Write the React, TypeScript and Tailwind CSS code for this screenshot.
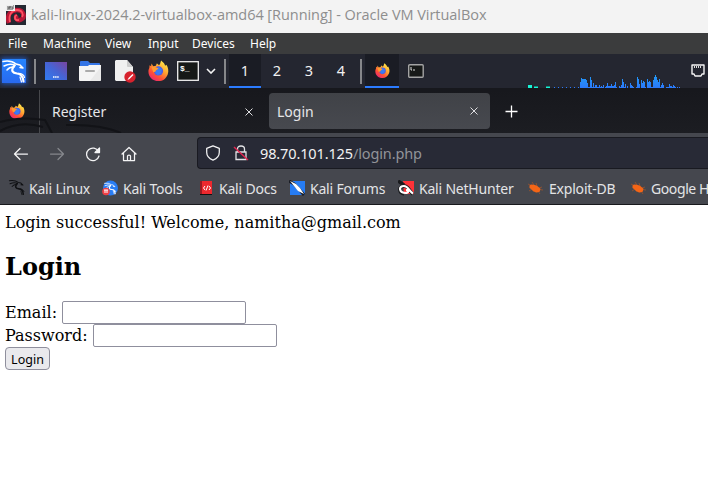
import type { ReactNode } from 'react';

const ui = "font-['Noto_Sans',sans-serif]";

function Firefox({ size }: { size: number }) {
  const id = 'fx' + size;
  return (
    <svg width={size} height={size} viewBox="0 0 24 24" className="shrink-0">
      <defs>
        <linearGradient id={id} x1="0.85" y1="0.05" x2="0.2" y2="1">
          <stop offset="0" stopColor="#fff04d" />
          <stop offset=".4" stopColor="#ffa12f" />
          <stop offset=".7" stopColor="#ff5035" />
          <stop offset="1" stopColor="#e6227a" />
        </linearGradient>
      </defs>
      <path fill={`url(#${id})`} d="M4 4l2 3 3-.5L10 4c1 .4 2 1 2.500 2C14 5 14 3 15 .5c2 2 4 3 4.500 6l1.500-1c2 3 3 7 1.500 11C20.500 21.500 17 24 12 24 5 24 .5 19 .5 13c0-2 .5-3 1-4l.3-3 1.700 1z" />
      <circle cx="12" cy="12.500" r="5.300" fill="#5558dc" />
      <path fill="#397bf4" d="M12 7.500l4 3-1 5-4 2-3-3z" />
      <path fill="#ff9c32" d="M4 8c3-1 5 .2 8 1.500-1 2-3.500 2-3.500 4L6 14z" />
    </svg>
  );
}

function DragonLines({ color }: { color: string }) {
  return (
    <g fill="none" stroke={color} strokeLinecap="round" strokeLinejoin="round">
      <path strokeWidth="1.500" d="M1 2.500Q9 1 14 5l4 1 3 3-3-.5M2 7q6-3 11-.5M5 11q3-3.500 7-3" />
      <path strokeWidth="2.200" d="M12.500 6.500C8 12 11 14 15 14.500c4 .4 6 3.500 6.500 8" />
      <path strokeWidth="1.200" d="M15 14.500c5-.5 7 2 7.500 4M18 18l1.500 5" />
    </g>
  );
}

function Beetle() {
  return (
    <svg width="15" height="14" viewBox="0 0 15 14">
      <path d="M0 3l4 2M4 1l2 3M8 2l1 3M14 6l-3 1M15 9l-4-.5M4 8l-3 2M8 10v2M12 13l-2-3" stroke="#9b542d" strokeWidth=".8" fill="none" />
      <path fill="#f46516" d="M1.500 4.500L3 3.500l3 .3 3 1 3.500 3-.8 3-2.700.7-3.500-1-2.500-2.500-1.500-1z" />
    </svg>
  );
}

function NavIcon({ children, dim }: { children: ReactNode; dim?: boolean }) {
  return (
    <svg width="16" height="16" viewBox="0 0 16 16" fill="none" stroke={dim ? '#85878c' : '#f4f4f5'} strokeWidth="1.250" strokeLinecap="round" strokeLinejoin="round" className="shrink-0">
      {children}
    </svg>
  );
}

function Cross() {
  return <svg width="8" height="8" viewBox="0 0 8 8" className="shrink-0"><path d="M.5.5l7 7m0-7l-7 7" stroke="#dedee0" strokeWidth="1" /></svg>;
}

const menus: [string, string][] = [['File', 'w-[35px]'], ['Machine', 'w-[62px]'], ['View', 'w-[43px]'], ['Input', 'w-[44px]'], ['Devices', 'w-[58px]'], ['Help', 'w-[40px]']];

const load = [6,10,9,9,9,9,8,5,1,1,11,8,1,5,1,3,3,1,1,3,1,2,1,3,0,1,2,5,2,2,2,4,2,2,3,6,1,0,0,2,1,3,9,6,1,4,0,2,0,0,5,3,2,1,0,0,1,11,9,4,0,8,5,7,6,1,0,9,6,7,6,1,1,8,11,13,11,8,6,9,1,3,5,3,0,0,1,1,1,4,2,2,1,3,2,1,0,1,0,1];

function LoadGraph() {
  return (
    <svg width="152" height="34" viewBox="528 54 152 34" shapeRendering="crispEdges">
      <defs><linearGradient id="load" gradientUnits="userSpaceOnUse" x1="0" x2="0" y1="75" y2="88"><stop stopColor="#219bf5" /><stop offset="1" stopColor="#2b79fb" /></linearGradient></defs>
      <path fill="#16f5d6" d="M528 85h4v3h-4zM534 87h4v1h-4zM546 87h4v1h-4z" />
      <path fill="#178b80" d="M534 86h4v1h-4zM546 86h4v1h-4z" />
      {[554, 558, 562, 566, 570, 574, 578].map((x) => <rect key={x} x={x} y="87" width="1" height="1" fill="#2b79fb" />)}
      {load.map((h, i) => <rect key={i} x={580 + i} y={88 - h} width="1" height={h} fill="url(#load)" />)}
    </svg>
  );
}

function Bookmark({ icon, label, width, tight }: { icon: ReactNode; label: string; width: string; tight?: boolean }) {
  return (
    <div className={`flex shrink-0 items-center ${width}`}>
      <span className={`flex shrink-0 items-center ${tight ? 'w-[20px]' : 'w-[21px]'}`}>{icon}</span>
      <span className={`pt-[2px] whitespace-nowrap ${tight ? 'tracking-[-0.4px]' : 'tracking-[-0.2px]'}`}>{label}</span>
    </div>
  );
}

export default function App() {
  return (
    <div className={`flex h-[485px] w-[708px] flex-col overflow-hidden bg-white ${ui}`}>
      <header className="flex h-[33px] shrink-0 items-center bg-[#f3f3f3] pb-[4px] pl-[6px]">
        <svg width="20" height="20" viewBox="0 0 20 20" className="mr-[5px]">
          <path fill="#242831" d="M0 0h20v20H0z" />
          <path fill="none" stroke="#b91736" strokeWidth="4.500" d="M3 18C0 10 5 5 11 5c7 0 8 7 5 9-4 3-8-1-5-4" />
          <path fill="none" stroke="#ff5061" strokeWidth="1.800" d="M4 17C2 10 6 5 11 5c5 0 7 4 5 7M13 15c-5 1-5-4-2-5" />
          <path fill="#eee" d="M0 0h9v6H0z" />
          <path d="M2 1v4m0-2h2V1m0 0v4m2-4v4m0-2h2M7 1h1" stroke="#555" fill="none" />
        </svg>
        <span className="font-['Open_Sans',sans-serif] text-[14.5px] leading-5 tracking-[-0.05px] whitespace-nowrap text-[#8e8e8e]">kali-linux-2024.2-virtualbox-amd64 [Running] - Oracle VM VirtualBox</span>
      </header>
      <nav className="flex h-[21px] shrink-0 items-center bg-[#3b3c3d] pl-[8px] text-[12px] text-white">
        {menus.map(([m, w]) => <span key={m} className={`shrink-0 ${w}`}>{m}</span>)}
      </nav>
      <section className="flex h-[36px] shrink-0 border-b-2 border-[#17181d] bg-[#242630] text-[#f1f1f1]">
        <div className="flex w-[34px] shrink-0 items-center pl-[2px]">
          <svg width="24" height="24" viewBox="0 0 24 24" className="shadow-[0_0_5px_1px_#2559ba]">
            <defs><linearGradient id="kali" x2="0" y2="1"><stop stopColor="#2584ff" /><stop offset="1" stopColor="#2869ef" /></linearGradient></defs>
            <path fill="url(#kali)" d="M0 0h24v24H0z" /><DragonLines color="#fff" />
          </svg>
        </div>
        <i className="mt-[5px] h-[25px] w-[2px] shrink-0 bg-[#86878a]" />
        <div className="w-[34px] shrink-0 pt-[8px] pl-[9px]">
          <svg width="22" height="18" viewBox="0 0 22 18"><defs><linearGradient id="desk" x1="0" x2="1" y1="1" y2="0"><stop stopColor="#317cf1" /><stop offset=".5" stopColor="#4664d4" /><stop offset="1" stopColor="#79459f" /></linearGradient></defs><path fill="url(#desk)" d="M0 0h22v18H0z" /><path d="M8 15h6" stroke="#fff" strokeWidth="1.500" strokeDasharray="1.500 .6" /></svg>
        </div>
        <div className="w-[35px] shrink-0 pt-[7px] pl-[9px]">
          <svg width="22" height="20" viewBox="0 0 22 20"><path fill="#3575e6" d="M1 6V1q0-1 1-1h7l2 2h9q1 0 1 1v4z" /><path fill="#f4f4f4" d="M0 5h9l1-1h12v15q0 1-1 1H1q-1 0-1-1z" /><path fill="#ddd" d="M22 6v13q0 1-1 1h-10z" opacity=".5" /><path d="M7 10h8" stroke="#aaa" strokeWidth="2" strokeLinecap="round" /></svg>
        </div>
        <div className="w-[43px] shrink-0 pt-[6px] pl-[10px]">
          <svg width="21" height="23" viewBox="0 0 21 23"><path fill="#f0f0f0" d="M0 1l1-1h11l6 7v13l-1 1H1l-1-1z" /><path fill="#ccc" d="M12 0l6 7h-5q-1 0-1-1z" /><circle cx="15" cy="17" r="5.700" fill="#d7222d" /><path d="M12.500 20l1-2 4-4 1 1-4 4z" fill="#fff" /></svg>
        </div>
        <div className="w-[28px] shrink-0 pt-[6px]"><Firefox size={21} /></div>
        <div className="w-[30px] shrink-0 pt-[7px]">
          <svg width="23" height="20" viewBox="0 0 23 20" className="ml-px"><rect x=".7" y=".7" width="20.600" height="18.600" fill="#161917" stroke="#f0f0f0" strokeWidth="1.300" /><text x="3" y="10" fill="#fff" fontFamily="Liberation Mono" fontWeight="bold" fontSize="8">$_</text></svg>
        </div>
        <div className="w-[18px] shrink-0 pt-[14px]"><svg width="10" height="6" viewBox="0 0 10 6"><path d="M1 1l4 4 4-4" fill="none" stroke="#f3f3f3" strokeWidth="1.600" /></svg></div>
        <i className="mt-[5px] h-[25px] w-[2px] shrink-0 bg-[#86878a]" />
        <div className="ml-[3px] flex text-center text-[14.5px] leading-[33px]">
          <span className="w-[32px] border-b-2 border-[#2b7bff] bg-[#1a1c24]">1</span>
          <span className="w-[32px]">2</span><span className="w-[32px]">3</span><span className="w-[32px]">4</span>
        </div>
        <i className="mt-[5px] ml-[3px] h-[25px] w-[2px] shrink-0 bg-[#86878a]" />
        <div className="ml-[3px] flex w-[34px] shrink-0 items-center justify-center border-b-2 border-[#2b7bff] bg-[#1a1c24] pt-px"><Firefox size={15} /></div>
        <div className="w-[129px] shrink-0 pt-[10px] pl-[9px]"><svg width="16" height="14" viewBox="0 0 16 14"><rect x=".7" y=".7" width="14.500" height="12.600" rx="1" fill="#171918" stroke="#a4a4a4" strokeWidth="1.400" /><path d="M3 3v3h1m1 0h2" fill="none" stroke="#ddd" /></svg></div>
        <LoadGraph />
        <svg width="14" height="14" viewBox="0 0 14 14" className="mt-[10px] ml-[11px] shrink-0"><path fill="none" stroke="#f4f4f4" strokeWidth="1.400" strokeLinejoin="round" d="M1 1h12v9h-2l-1 2H4l-1-2H1z" /><path d="M3.500 2v2m2-2v2m2-2v2m2-2v2" stroke="#ddd" /></svg>
      </section>
      <section className="flex h-[43px] shrink-0 bg-linear-to-b from-[#17181d] to-[#1c1d22] text-[14px] text-[#e6e6e8]">
        <div className="flex w-[40px] shrink-0 justify-center border-r border-[#47484c] pt-[13px] pr-[5px]"><Firefox size={16} /></div>
        <div className="relative flex w-[229px] shrink-0 items-center pr-[16px] pl-[12px]">
          <svg width="160" height="20" viewBox="0 0 160 20" className="absolute bottom-0 -left-[40px]" fill="none" stroke="#121317" strokeWidth="2"><path d="M0 9Q20 3 45 7l7 13M0 18Q20 7 43 14M66 12q35-1 55 8" /></svg>
          <span className="relative flex-1">Register</span><Cross />
        </div>
        <div className="mt-[3px] flex h-[36px] w-[221px] shrink-0 items-center rounded-[4px] bg-linear-to-b from-[#404247] to-[#47494f] pr-[12px] pl-[8px]"><span className="flex-1">Login</span><Cross /></div>
        <svg width="13" height="13" viewBox="0 0 13 13" className="mt-[15px] ml-[15px]"><path d="M6.500.5v12M.5 6.500h12" stroke="#fff" strokeWidth="1.300" /></svg>
      </section>
      <section className="flex h-[38px] shrink-0 bg-[#45474e]">
        <div className="flex w-[197px] shrink-0 gap-[20px] pt-[13px] pl-[13px]">
          <NavIcon><path d="M14.500 8h-13M7 2.500L1.500 8 7 13.500" /></NavIcon>
          <NavIcon dim><path d="M1.500 8h13M9 2.500L14.500 8 9 13.500" /></NavIcon>
          <NavIcon><path d="M13.500 5.500A6.300 6.300 0 1 0 14 10" /><path fill="#f4f4f5" d="M14.500 2v4.500H10z" /></NavIcon>
          <NavIcon><path d="M1 8l7-6.500L15 8M2.500 7v7.500h11V7M6.500 14.500V10q0-1 1.500-1t1.500 1v4.500" /></NavIcon>
        </div>
        <div className="mt-[4px] flex h-[32px] flex-1 items-center rounded-l-[4px] border border-r-0 border-[#191a21] bg-[#282a36] pl-[7px]">
          <NavIcon><path d="M8 .8l6.300 2.500v4C14.300 11 11 14 8 15.200 5 14 1.700 11 1.700 7.300v-4z" /></NavIcon>
          <svg width="16" height="16" viewBox="0 0 16 16" className="ml-[12px]" fill="none" stroke="#e2e2e5" strokeWidth="1.300"><path d="M4.500 7V4q0-3 3.500-3t3.500 3v3M3 7h10v7.500H3z" /><path stroke="#e2244f" strokeWidth="1.500" d="M1 2l14 13" /></svg>
          <span className="ml-[11px] pt-px text-[14.5px] tracking-[-0.13px] text-[#f2f2f3]">98.70.101.125<span className="text-[#929399]">/login.php</span></span>
        </div>
      </section>
      <section className="flex h-[34px] shrink-0 items-center border-b border-[#18191d] bg-[#45474e] pl-[8px] text-[14px] text-[#e3e4e6]">
        <Bookmark width="w-[94px]" label="Kali Linux" icon={<svg width="17" height="17" viewBox="-1 0 25 25"><DragonLines color="#101114" /></svg>} />
        <Bookmark width="w-[96px]" label="Kali Tools" icon={<svg width="16" height="16" viewBox="0 0 16 16"><circle cx="8.500" cy="8" r="7.500" fill="#287df5" /><g transform="translate(2 2) scale(.52)"><DragonLines color="#fff" /></g><circle cx="4" cy="11.500" r="3.800" fill="#ef3f45" /><path d="M2 10h4m-3 0v3m2-3v3" stroke="#fff" /></svg>} />
        <Bookmark width="w-[91px]" label="Kali Docs" icon={<svg width="16" height="16" viewBox="-1 0 16 16"><path fill="#981a22" d="M1 1h2v14H1z" /><path fill="#ed282e" d="M3 1h10v14H3z" /><path fill="#111" d="M1 14h12v1H1z" /><path d="M6 6L4.500 8 6 10m4-4l1.500 2-1.500 2M9 5.500L7 10.500" stroke="#fff" fill="none" /></svg>} />
        <Bookmark width="w-[109px]" label="Kali Forums" icon={<svg width="16" height="16" viewBox="0 0 16 16"><path fill="#267cf3" d="M1 1h15v14H1z" /><path d="M0 1l5 3 4 4 6 7" stroke="#191c24" strokeWidth="3" fill="none" /><path d="M1 1l6 3 4 4 4 6-6-3-4-5z" fill="#fff" /></svg>} />
        <Bookmark width="w-[130px]" label="Kali NetHunter" icon={<svg width="17" height="16" viewBox="0 0 17 16"><path fill="#ff3238" d="M5 1h11v13H6z" /><path d="M0 1l6 4M6 14C1 13 0 7 6 6c4-1 5 5 9 8" stroke="#191a1d" strokeWidth="3.500" fill="none" /><path d="M8 13C1 13 0 6 6 6c4 0 5 5 9 7.500M7 13c4 0 4-3 1-3" stroke="#fff" strokeWidth="2.200" fill="none" /></svg>} />
        <Bookmark width="w-[103px]" label="Exploit-DB" icon={<Beetle />} />
        <Bookmark width="w-[77px]" tight label="Google H" icon={<Beetle />} />
      </section>
      <main className="flex-1 pt-[8px] pl-[5px] font-['DejaVu_Serif',serif] text-[16px] leading-[20px] text-black">
        <p>Login successful! Welcome, namitha@gmail.com</p>
        <h2 className="mt-[19px] h-[30px] text-[24px] leading-[30px] font-bold">Login</h2>
        <form className="mt-[19px]">
          <label className="flex h-[23px] items-center whitespace-nowrap">Email:<input className="ml-[5px] h-[23px] w-[184px] rounded-[2px] border border-[#8f8f9d] bg-white" /></label>
          <label className="flex h-[23px] items-center whitespace-nowrap">Password:<input className="ml-[5px] h-[23px] w-[184px] rounded-[2px] border border-[#8f8f9d] bg-white" /></label>
          <button type="button" className={`flex h-[23px] w-[45px] items-center justify-center rounded-[4px] border border-[#8f8f9d] bg-[#e9e9ed] pt-[2px] text-[12.5px] ${ui}`}>Login</button>
        </form>
      </main>
    </div>
  );
}
